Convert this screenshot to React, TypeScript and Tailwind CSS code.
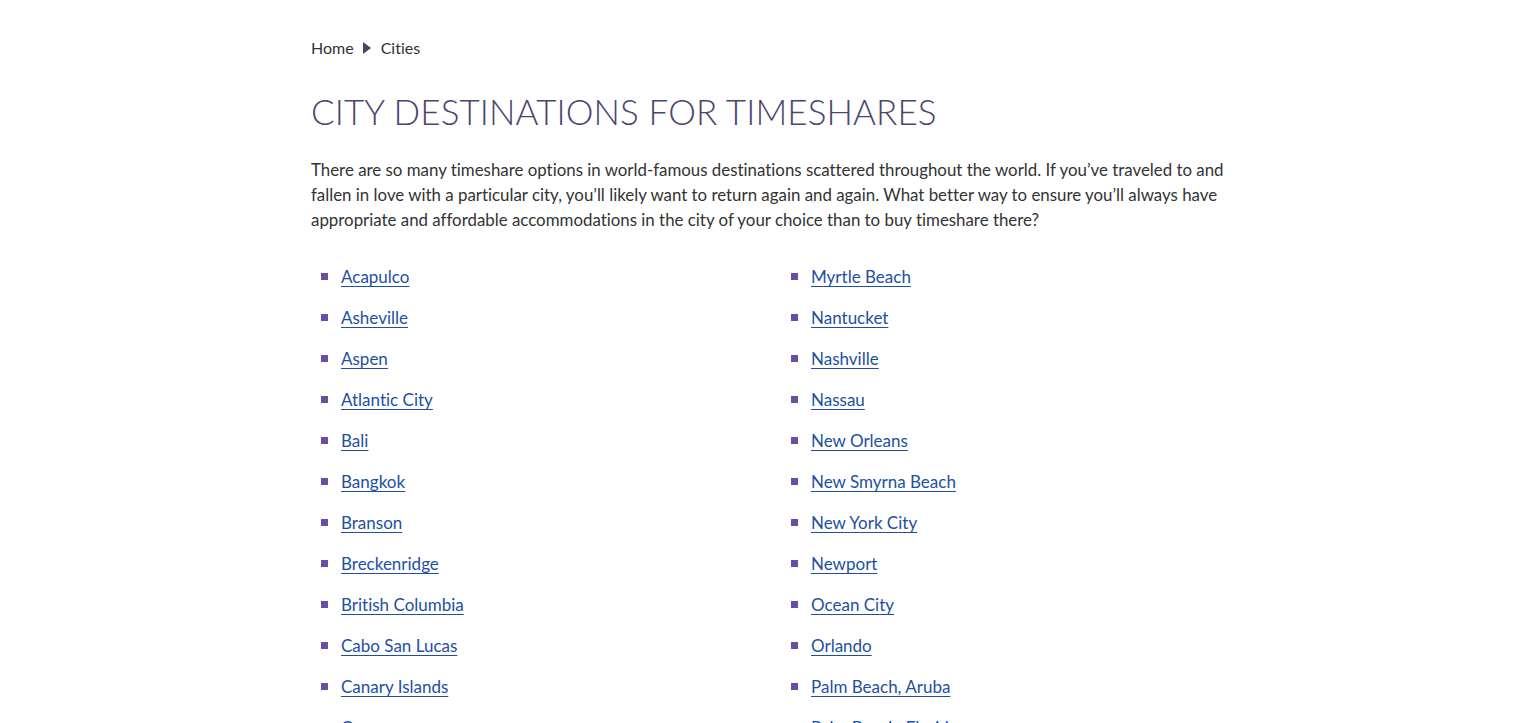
import React from 'react';

const leftCities = [
  'Acapulco',
  'Asheville',
  'Aspen',
  'Atlantic City',
  'Bali',
  'Bangkok',
  'Branson',
  'Breckenridge',
  'British Columbia',
  'Cabo San Lucas',
  'Canary Islands',
  'Cancun',
];

const rightCities = [
  'Myrtle Beach',
  'Nantucket',
  'Nashville',
  'Nassau',
  'New Orleans',
  'New Smyrna Beach',
  'New York City',
  'Newport',
  'Ocean City',
  'Orlando',
  'Palm Beach, Aruba',
  'Palm Beach, Florida',
];

const CityList: React.FC<{ cities: string[] }> = ({ cities }) => (
  <ul className="flex flex-col gap-[18px]">
    {cities.map((city) => (
      <li key={city} className="flex items-center h-[23px]">
        <span className="w-[7px] h-[7px] bg-[#6a4ea6] ml-[10px] mr-[13px] shrink-0" />
        <a href="#" className="text-[17px] text-[#1e4fa3] underline underline-offset-[3px] decoration-1">
          {city}
        </a>
      </li>
    ))}
  </ul>
);

export default function App() {
  return (
    <div className="min-h-screen bg-white font-['Lato',sans-serif] text-[#333] [font-variant-ligatures:none]">
      <div className="w-[917px] mx-auto pt-[38px]">
        <nav className="flex items-center text-[16px] text-[#333] h-[20px]">
          <a href="#">Home</a>
          <svg className="w-[8px] h-[12px] ml-[9px] mr-[10px]" viewBox="0 0 8 12">
            <path d="M0 0 L8 6 L0 12 Z" fill="#4b4566" />
          </svg>
          <span>Cities</span>
        </nav>

        <h1 className="mt-[32px] text-[35px] font-light text-[#4b4570] leading-[42px] tracking-[0.1px]">
          CITY DESTINATIONS FOR TIMESHARES
        </h1>

        <p className="mt-[25px] w-[930px] text-[16.88px] leading-[25px] text-[#333]">
          There are so many timeshare options in world-famous destinations scattered throughout the world. If you’ve
          traveled to and fallen in love with a particular city, you’ll likely want to return again and again. What better
          way to ensure you’ll always have appropriate and affordable accommodations in the city of your choice than to buy
          timeshare there?
        </p>

        <div className="mt-[33px] grid grid-cols-[470px_1fr]">
          <CityList cities={leftCities} />
          <CityList cities={rightCities} />
        </div>
      </div>
    </div>
  );
}
